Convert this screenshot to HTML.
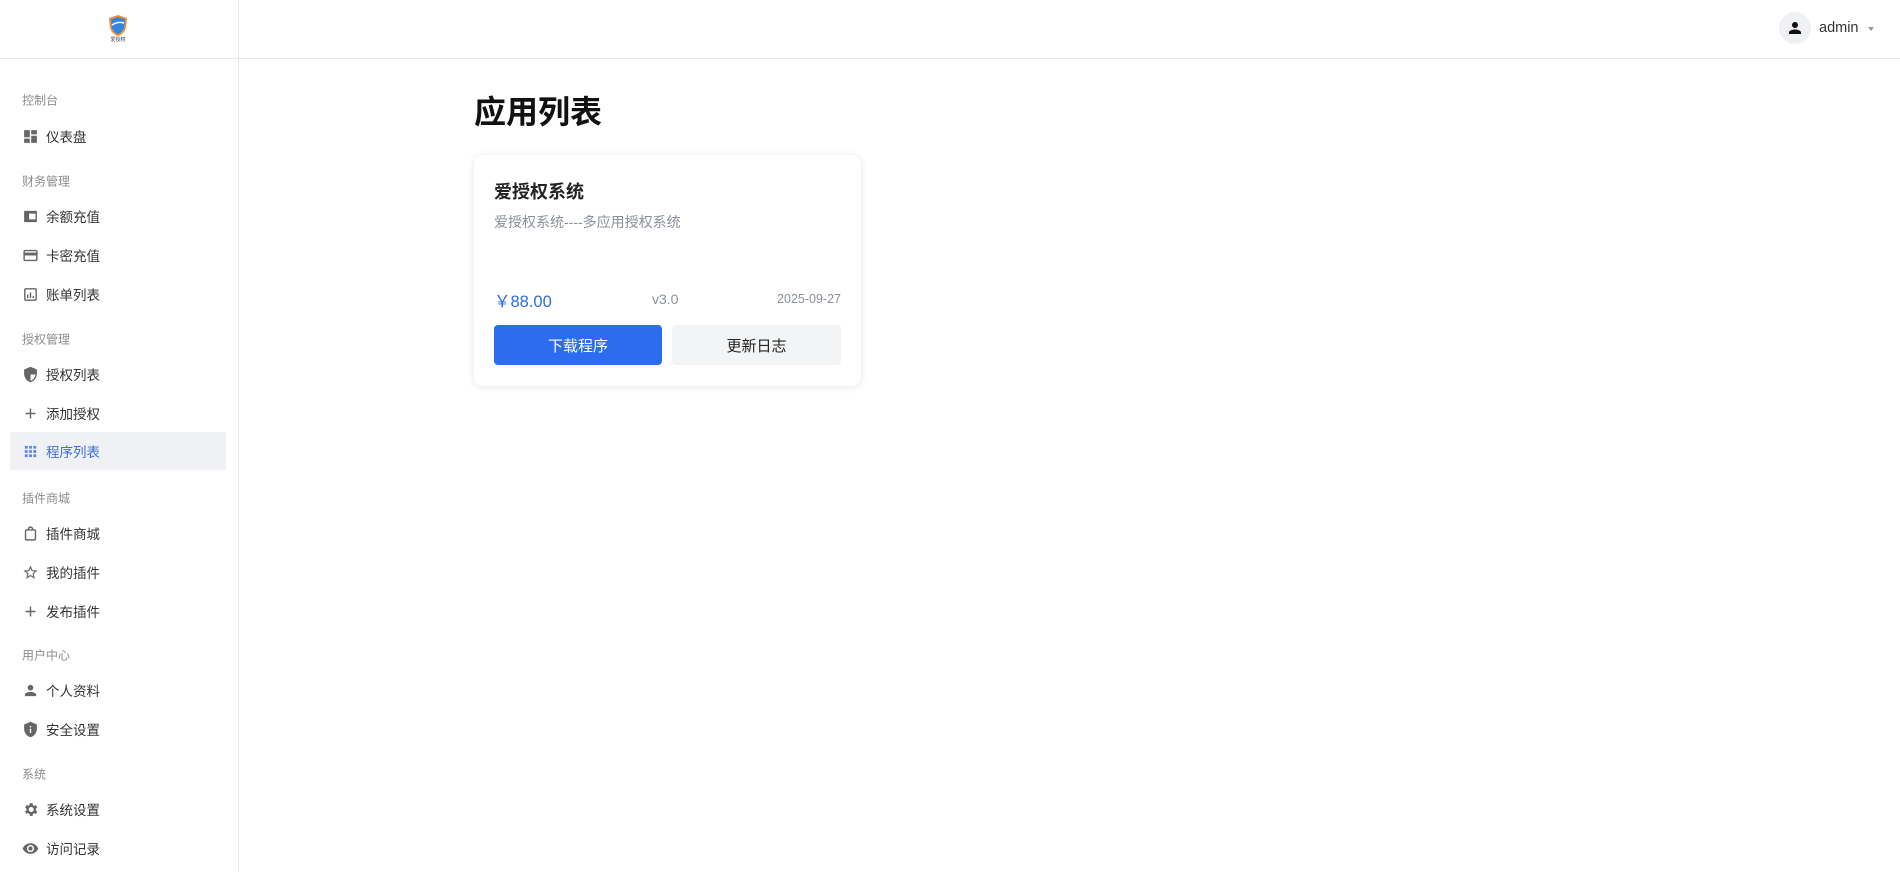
<!DOCTYPE html>
<html><head><meta charset="utf-8"><style>
*{margin:0;padding:0;box-sizing:border-box}
body{width:1900px;height:872px;background:#fff;font-family:"Liberation Sans","Noto Sans CJK SC",sans-serif;position:relative;overflow:hidden;color:#333}
.side{position:absolute;left:0;top:0;width:239px;height:872px;border-right:1px solid #e5e7eb}
.hdr{position:absolute;left:0;top:0;width:1900px;height:59px;border-bottom:1px solid #e5e7eb}
.lab{position:absolute;left:22px;font-size:12px;color:#8c8c8c;transform:translateY(-50%)}
.it{position:absolute;left:10px;width:216px;height:38px;transform:translateY(-50%);display:flex;align-items:center;font-size:13.5px;color:#333}
.it svg{position:absolute;left:12px;width:17px;height:17px;fill:#666}
.it span{position:absolute;left:36px}
.act{background:#f0f1f4;color:#3b6fd8}
.act svg{fill:#5b86e0}
</style></head><body>
<div class="hdr"></div>
<div class="side"></div>
<svg style="position:absolute;left:107px;top:14px" width="22" height="28" viewBox="0 0 22 28">
<path d="M11 1 L20 4 L19 14 Q17 20 11 22 Q5 20 3 14 L2 4 Z" fill="#f08a3c"/>
<path d="M11 3 L18 5.5 L17 14 Q15 18.5 11 20 Q7 18.5 5 14 L4 5.5 Z" fill="#2f86e0"/>
<path d="M5 11 Q11 7 17 9" stroke="#fff" stroke-width="1.5" fill="none"/>
<text x="11" y="27" font-size="5" text-anchor="middle" fill="#333" font-family="Noto Sans CJK SC">爱授权</text></svg>
<div class="lab" style="top:100px">控制台</div>
<div class="it" style="top:136px"><svg viewBox="0 0 24 24"><path d="M3 13h8V3H3zm0 8h8v-6H3zm10 0h8V11h-8zm0-18v6h8V3z"/></svg><span>仪表盘</span></div>
<div class="lab" style="top:181px">财务管理</div>
<div class="it" style="top:216px"><svg viewBox="0 0 24 24"><path d="M3 4h18v16H3zM10 8v8h9V8z"/></svg><span>余额充值</span></div>
<div class="it" style="top:255px"><svg viewBox="0 0 24 24"><path d="M20 4H4c-1.1 0-2 .9-2 2v12c0 1.1.9 2 2 2h16c1.1 0 2-.9 2-2V6c0-1.1-.9-2-2-2zm0 14H4v-6h16zm0-10H4V6h16z"/></svg><span>卡密充值</span></div>
<div class="it" style="top:294px"><svg viewBox="0 0 24 24"><path d="M19 3H5c-1.1 0-2 .9-2 2v14c0 1.1.9 2 2 2h14c1.1 0 2-.9 2-2V5c0-1.1-.9-2-2-2zm0 16H5V5h14zM7 12h2v5H7zm4-3h2v8h-2zm4 5h2v3h-2z"/></svg><span>账单列表</span></div>
<div class="lab" style="top:339px">授权管理</div>
<div class="it" style="top:374px"><svg viewBox="0 0 24 24"><path d="M12 1 3 5v6c0 5.5 3.8 10.7 9 12 5.2-1.3 9-6.5 9-12V5zm0 11h7c-.5 4.1-3.3 7.8-7 8.9z"/></svg><span>授权列表</span></div>
<div class="it" style="top:413px"><svg viewBox="0 0 24 24"><path d="M19 13h-6v6h-2v-6H5v-2h6V5h2v6h6z"/></svg><span>添加授权</span></div>
<div class="it act" style="top:451px"><svg viewBox="0 0 24 24"><path d="M4 4h4v4H4zm6 0h4v4h-4zm6 0h4v4h-4zM4 10h4v4H4zm6 0h4v4h-4zm6 0h4v4h-4zM4 16h4v4H4zm6 0h4v4h-4zm6 0h4v4h-4z"/></svg><span>程序列表</span></div>
<div class="lab" style="top:498px">插件商城</div>
<div class="it" style="top:533px"><svg viewBox="0 0 24 24"><path d="M18 6h-2c0-2.2-1.8-4-4-4S8 3.8 8 6H6c-1.1 0-2 .9-2 2v12c0 1.1.9 2 2 2h12c1.1 0 2-.9 2-2V8c0-1.1-.9-2-2-2zm-6-2c1.1 0 2 .9 2 2h-4c0-1.1.9-2 2-2zm6 16H6V8h12z"/></svg><span>插件商城</span></div>
<div class="it" style="top:572px"><svg viewBox="0 0 24 24"><path d="m22 9.2-7.2-.6L12 2 9.2 8.6 2 9.2 7.5 14l-1.6 7L12 17.3l6.2 3.7-1.7-7zM12 15.4l-3.8 2.3 1-4.3-3.3-2.9 4.4-.4L12 6.1l1.7 4 4.4.4-3.3 2.9 1 4.3z"/></svg><span>我的插件</span></div>
<div class="it" style="top:611px"><svg viewBox="0 0 24 24"><path d="M19 13h-6v6h-2v-6H5v-2h6V5h2v6h6z"/></svg><span>发布插件</span></div>
<div class="lab" style="top:655px">用户中心</div>
<div class="it" style="top:690px"><svg viewBox="0 0 24 24"><path d="M12 12c2.2 0 4-1.8 4-4s-1.8-4-4-4-4 1.8-4 4 1.8 4 4 4zm0 2c-2.7 0-8 1.3-8 4v2h16v-2c0-2.7-5.3-4-8-4z"/></svg><span>个人资料</span></div>
<div class="it" style="top:729px"><svg viewBox="0 0 24 24"><path d="M12 1 3 5v6c0 5.5 3.8 10.7 9 12 5.2-1.3 9-6.5 9-12V5zm1 16h-2v-6h2zm0-8h-2V7h2z"/></svg><span>安全设置</span></div>
<div class="lab" style="top:774px">系统</div>
<div class="it" style="top:809px"><svg viewBox="0 0 24 24"><path d="M19.4 13c.1-.3.1-.7.1-1s0-.7-.1-1l2.1-1.7-2-3.5-2.5 1c-.5-.4-1.1-.7-1.7-1L15 3h-4l-.4 2.7c-.6.3-1.2.6-1.7 1l-2.5-1-2 3.5L6.5 11c0 .3-.1.7-.1 1s0 .7.1 1l-2.1 1.7 2 3.5 2.5-1c.5.4 1.1.7 1.7 1L11 21h4l.4-2.7c.6-.3 1.2-.6 1.7-1l2.5 1 2-3.5zM13 15.5c-1.9 0-3.5-1.6-3.5-3.5s1.6-3.5 3.5-3.5 3.5 1.6 3.5 3.5-1.6 3.5-3.5 3.5z"/></svg><span>系统设置</span></div>
<div class="it" style="top:848px"><svg viewBox="0 0 24 24"><path d="M12 4.5C7 4.5 2.7 7.6 1 12c1.7 4.4 6 7.5 11 7.5s9.3-3.1 11-7.5c-1.7-4.4-6-7.5-11-7.5zM12 17c-2.8 0-5-2.2-5-5s2.2-5 5-5 5 2.2 5 5-2.2 5-5 5zm0-8c-1.7 0-3 1.3-3 3s1.3 3 3 3 3-1.3 3-3-1.3-3-3-3z"/></svg><span>访问记录</span></div>

<div style="position:absolute;left:1779px;top:12px;width:32px;height:32px;border-radius:50%;background:#f0f1f4"></div>
<svg style="position:absolute;left:1786px;top:19px" width="18" height="18" viewBox="0 0 24 24"><path fill="#111" d="M12 12c2.2 0 4-1.8 4-4s-1.8-4-4-4-4 1.8-4 4 1.8 4 4 4zm0 2c-2.7 0-8 1.3-8 4v2h16v-2c0-2.7-5.3-4-8-4z"/></svg>
<div style="position:absolute;left:1819px;top:20px;font-size:14.5px;color:#333">admin</div>
<div style="position:absolute;left:1868px;top:27px;border-left:3.5px solid transparent;border-right:3.5px solid transparent;border-top:4px solid #999"></div>

<div style="position:absolute;left:474px;top:92px;font-size:32px;font-weight:bold;color:#111;line-height:40px">应用列表</div>
<div style="position:absolute;left:474px;top:155px;width:387px;height:231px;border-radius:9px;background:#fff;box-shadow:0 1px 8px rgba(0,0,0,.1)"></div>
<div style="position:absolute;left:494px;top:178px;font-size:18px;font-weight:bold;color:#222">爱授权系统</div>
<div style="position:absolute;left:494px;top:212px;font-size:14px;color:#8a8f99">爱授权系统----多应用授权系统</div>
<div style="position:absolute;left:494px;top:288px;font-size:16.5px;color:#2d6be4">￥88.00</div>
<div style="position:absolute;left:652px;top:291px;font-size:14px;color:#8a8f99">v3.0</div>
<div style="position:absolute;left:761px;top:292px;width:80px;text-align:right;font-size:12.5px;color:#8a8f99">2025-09-27</div>
<div style="position:absolute;left:494px;top:325px;width:168px;height:40px;border-radius:4px;background:#2d6cf0;color:#fff;font-size:15px;display:flex;align-items:center;justify-content:center">下载程序</div>
<div style="position:absolute;left:672px;top:325px;width:169px;height:40px;border-radius:4px;background:#f3f4f6;color:#222;font-size:15px;display:flex;align-items:center;justify-content:center">更新日志</div>
</body></html>
